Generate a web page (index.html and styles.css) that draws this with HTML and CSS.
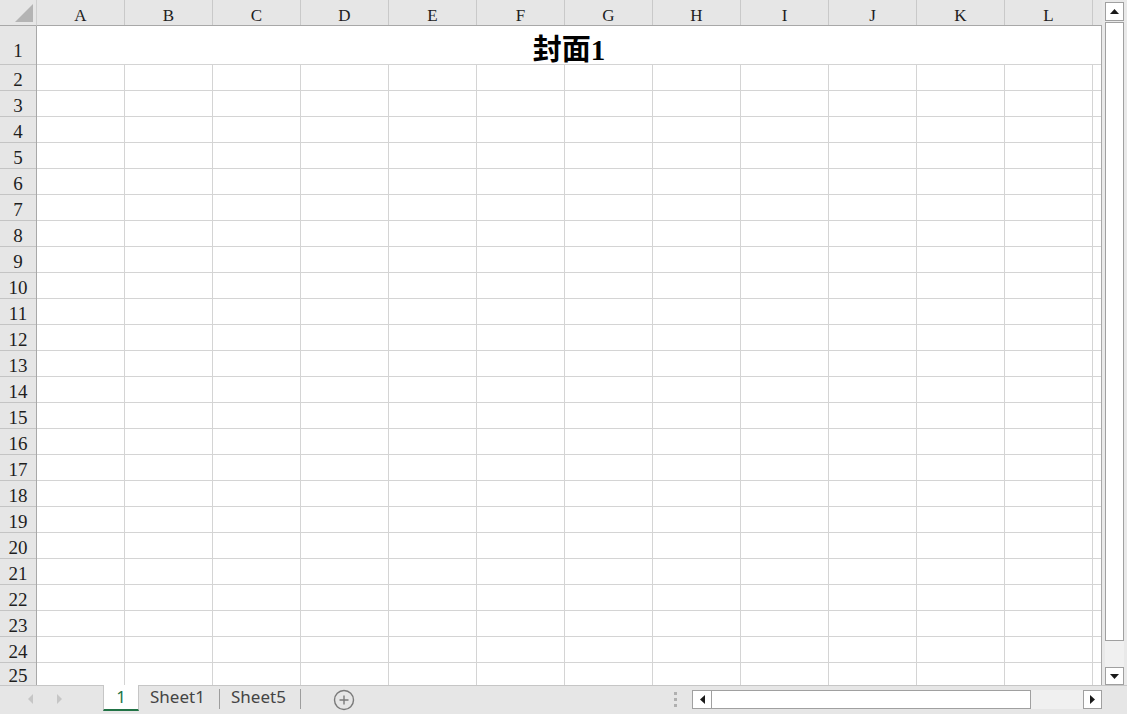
FILE: index.html
```html
<!DOCTYPE html>
<html lang="zh">
<head>
<meta charset="utf-8">
<title>封面1</title>
<link rel="stylesheet" href="styles.css">
</head>
<body>
<div class="app">
  <div class="main">
    <div class="sheet">
      <div class="corner">
        <svg class="corner-tri" width="18" height="18" viewBox="0 0 18 18"><polygon points="18,0 18,18 0,18" fill="#b4b4b4"/></svg>
      </div>
      <div class="colhead">
        <div class="ch">A</div>
        <div class="ch">B</div>
        <div class="ch">C</div>
        <div class="ch">D</div>
        <div class="ch">E</div>
        <div class="ch">F</div>
        <div class="ch">G</div>
        <div class="ch">H</div>
        <div class="ch">I</div>
        <div class="ch">J</div>
        <div class="ch">K</div>
        <div class="ch">L</div>
        <div class="ch ch-part"></div>
      </div>
      <div class="rowhead">
        <div class="rh rh-title">1</div>
        <div class="rh">2</div>
        <div class="rh">3</div>
        <div class="rh">4</div>
        <div class="rh">5</div>
        <div class="rh">6</div>
        <div class="rh">7</div>
        <div class="rh">8</div>
        <div class="rh">9</div>
        <div class="rh">10</div>
        <div class="rh">11</div>
        <div class="rh">12</div>
        <div class="rh">13</div>
        <div class="rh">14</div>
        <div class="rh">15</div>
        <div class="rh">16</div>
        <div class="rh">17</div>
        <div class="rh">18</div>
        <div class="rh">19</div>
        <div class="rh">20</div>
        <div class="rh">21</div>
        <div class="rh">22</div>
        <div class="rh">23</div>
        <div class="rh">24</div>
        <div class="rh rh-last">25</div>
      </div>
      <div class="cells">
        <div class="title">封面1</div>
        <div class="grid"></div>
      </div>
    </div>
    <div class="vscroll">
      <div class="sbtn">
        <svg width="9" height="5" viewBox="0 0 9 5"><polygon points="4.5,0 9,5 0,5" fill="#1a1a1a"/></svg>
      </div>
      <div class="vthumb"></div>
      <div class="vtrack"></div>
      <div class="sbtn">
        <svg width="9" height="5" viewBox="0 0 9 5"><polygon points="0,0 9,0 4.5,5" fill="#1a1a1a"/></svg>
      </div>
    </div>
  </div>
  <div class="tabbar">
    <div class="nav">
      <svg class="nav-arrow" width="5" height="10" viewBox="0 0 5 10"><polygon points="5,0 5,10 0,5" fill="#c6c6c6"/></svg>
      <svg class="nav-arrow nav-next" width="5" height="10" viewBox="0 0 5 10"><polygon points="0,0 5,5 0,10" fill="#c6c6c6"/></svg>
    </div>
    <div class="tab tab-active">1</div>
    <div class="tab">Sheet1</div>
    <span class="sep"></span>
    <div class="tab">Sheet5</div>
    <span class="sep"></span>
    <svg class="add" width="22" height="22" viewBox="0 0 22 22">
      <circle cx="11" cy="11" r="9.5" fill="none" stroke="#7a7a7a" stroke-width="1.4"/>
      <path d="M11 6.5v9M6.5 11h9" stroke="#7a7a7a" stroke-width="1.4"/>
    </svg>
    <div class="spacer"></div>
    <div class="grip"><i></i><i></i><i></i></div>
    <div class="hscroll">
      <div class="sbtn hbtn">
        <svg width="5" height="9" viewBox="0 0 5 9"><polygon points="5,0 5,9 0,4.5" fill="#1a1a1a"/></svg>
      </div>
      <div class="hthumb"></div>
      <div class="htrack"></div>
      <div class="sbtn hbtn">
        <svg width="5" height="9" viewBox="0 0 5 9"><polygon points="0,0 5,4.5 0,9" fill="#1a1a1a"/></svg>
      </div>
    </div>
    <div class="end"></div>
  </div>
</div>
</body>
</html>
```
FILE: styles.css
```css
html, body {
  margin: 0;
  padding: 0;
}
body {
  background: #e6e6e6;
  width: 1127px;
  height: 714px;
  overflow: hidden;
}
.app {
  display: flex;
  flex-direction: column;
  width: 1127px;
  height: 714px;
}
.main {
  display: flex;
  height: 685px;
  flex: none;
}
.sheet {
  width: 1102px;
  flex: none;
  display: grid;
  grid-template-columns: 37px 1065px;
  grid-template-rows: 26px 659px;
  background: #fff;
  overflow: hidden;
}
.corner {
  background: #e6e6e6;
  border-right: 1px solid #cfcfcf;
  border-bottom: 1px solid #a8a8a8;
  box-sizing: border-box;
}
.corner-tri {
  display: block;
  margin: 4px 0 0 15px;
}
.colhead {
  display: flex;
  background: #e6e6e6;
  border-bottom: 1px solid #a8a8a8;
  box-sizing: border-box;
}
.ch {
  width: 88px;
  flex: none;
  box-sizing: border-box;
  height: 25px;
  border-right: 1px solid #c9c9c9;
  text-align: center;
  font-family: "Liberation Serif", serif;
  font-size: 17px;
  line-height: 25px;
  padding-top: 3px;
  color: #1e1e1e;
}
.ch-part {
  flex: 1;
  width: auto;
  border-right: none;
}
.rowhead {
  background: #e6e6e6;
  border-right: 1px solid #a8a8a8;
  box-sizing: border-box;
  overflow: hidden;
}
.rh {
  height: 26px;
  box-sizing: border-box;
  border-bottom: 1px solid #c4c4c4;
  display: flex;
  align-items: flex-end;
  justify-content: center;
  font-family: "Liberation Serif", serif;
  font-size: 19px;
  line-height: 20px;
  color: #1e1e1e;
}
.rh-title {
  height: 39px;
  padding-bottom: 3px;
}
.rh-last {
  height: 22px;
  line-height: 18px;
  border-bottom: none;
}
.cells {
  display: flex;
  flex-direction: column;
  border-right: 1px solid #a8a8a8;
  box-sizing: border-box;
  overflow: hidden;
}
.title {
  height: 39px;
  flex: none;
  box-sizing: border-box;
  border-bottom: 1px solid #d4d4d4;
  display: flex;
  align-items: center;
  justify-content: center;
  padding-top: 3px;
  font-family: "Liberation Serif", "Noto Sans CJK SC", serif;
  font-weight: bold;
  font-size: 29px;
  color: #000;
}
.grid {
  flex: 1;
  background-image:
    repeating-linear-gradient(to right, transparent 0, transparent 87px, #d4d4d4 87px, #d4d4d4 88px),
    repeating-linear-gradient(to bottom, transparent 0, transparent 25px, #d4d4d4 25px, #d4d4d4 26px);
}
.vscroll {
  width: 25px;
  flex: none;
  display: flex;
  flex-direction: column;
  padding: 2px 3px 0 3px;
  box-sizing: border-box;
  background: #e9e9e9;
}
.sbtn {
  width: 19px;
  height: 19px;
  flex: none;
  box-sizing: border-box;
  border: 1px solid #a0a0a0;
  background: #fff;
  display: flex;
  align-items: center;
  justify-content: center;
}
.vscroll .sbtn:last-child {
  height: 18px;
}
.vthumb {
  height: 619px;
  flex: none;
  margin-top: 1px;
  box-sizing: border-box;
  border: 1px solid #a0a0a0;
  background: #fff;
}
.vtrack {
  flex: 1;
  background: #f0f0f0;
}
.tabbar {
  flex: 1;
  display: flex;
  align-items: flex-start;
  border-top: 1px solid #c6c6c6;
  background: #e6e6e6;
  font-family: "Noto Sans", "Liberation Sans", sans-serif;
  font-size: 17px;
}
.nav {
  width: 103px;
  flex: none;
  display: flex;
  padding: 8px 0 0 28px;
  box-sizing: border-box;
}
.nav-arrow {
  display: block;
}
.nav-next {
  margin-left: 24px;
}
.tab {
  width: 80px;
  flex: none;
  height: 24px;
  line-height: 22px;
  padding-left: 11px;
  box-sizing: border-box;
  color: #444;
}
.tab-active {
  width: 36px;
  height: 26px;
  margin-top: -1px;
  padding: 1px 0 0 0;
  text-align: center;
  background: #fff;
  border-left: 1px solid #c6c6c6;
  border-right: 1px solid #c6c6c6;
  border-bottom: 2px solid #217346;
  color: #217346;
}
.sep {
  width: 1px;
  height: 20px;
  margin-top: 3px;
  flex: none;
  background: #9d9d9d;
}
.add {
  display: block;
  flex: none;
  margin: 3px 0 0 32px;
}
.spacer {
  flex: 1;
}
.grip {
  display: flex;
  flex-direction: column;
  gap: 3px;
  margin: 6px 15px 0 0;
}
.grip i {
  display: block;
  width: 3px;
  height: 3px;
  background: #b0b0b0;
}
.hscroll {
  width: 410px;
  flex: none;
  display: flex;
  margin-top: 4px;
  height: 19px;
}
.hthumb {
  width: 319px;
  flex: none;
  box-sizing: border-box;
  border: 1px solid #a0a0a0;
  border-left: none;
  background: #fff;
}
.hscroll .hbtn:first-child {
  width: 20px;
}
.htrack {
  flex: 1;
  background: #f0f0f0;
}
.end {
  width: 25px;
  flex: none;
}
```
